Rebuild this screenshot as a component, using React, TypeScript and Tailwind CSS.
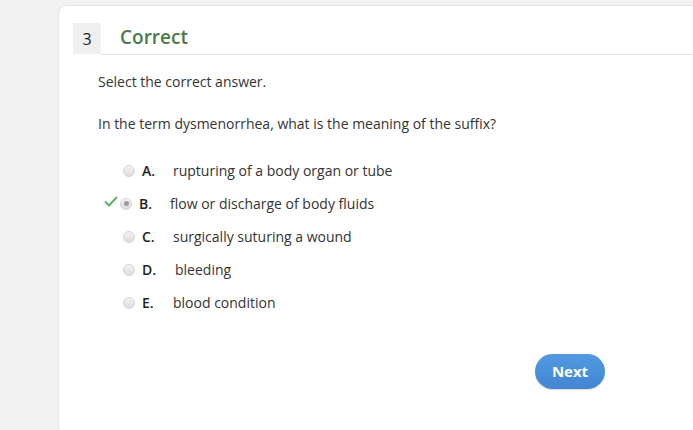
const OPTIONS = [
    { letter: "A.", text: "rupturing of a body organ or tube", selected: false },
    { letter: "B.", text: "flow or discharge of body fluids", selected: true },
    { letter: "C.", text: "surgically suturing a wound", selected: false },
    { letter: "D.", text: "bleeding", selected: false },
    { letter: "E.", text: "blood condition", selected: false },
];

function Radio({ checked }: { checked: boolean }) {
    return (
        <span className="flex h-[12px] w-[12px] items-center justify-center rounded-full border border-[#d4d4d4] bg-gradient-to-b from-[#f4f4f4] to-[#dcdcdc]">
            {checked ? <span className="h-[5px] w-[5px] rounded-full bg-[#9a9a9a]" /> : null}
        </span>
    );
}

export default function App() {
    return (
        <div
            className="h-[430px] w-[693px] overflow-hidden bg-[#f1f1f1] pl-[58px] pt-[5px] text-[#333]"
            style={{ fontFamily: '"Open Sans", sans-serif' }}
        >
            <div className="h-full rounded-tl-[8px] border-l border-t border-[#e6e6e6] bg-white pt-[17px]">
                <div className="flex items-stretch pl-[14px]">
                    <div className="flex h-[31px] w-[28px] items-center justify-center bg-[#efefef] text-[16px] text-[#222]">
                        3
                    </div>
                    <div className="flex flex-1 items-center border-b border-[#e3e3e3] pb-[2px] pl-[19px] text-[19px] font-semibold text-[#4c7a4c]">
                        Correct
                    </div>
                </div>

                <div className="pl-[39px] text-[14px]">
                    <p className="mt-[17px] leading-[20px]">Select the correct answer.</p>
                    <p className="mt-[22px] leading-[20px]">
                        In the term dysmenorrhea, what is the meaning of the suffix?
                    </p>

                    <div className="mt-[27px] flex flex-col gap-[13px]">
                        {OPTIONS.map((option) => (
                            <div
                                key={option.letter}
                                className={`flex h-[20px] items-center ${option.selected ? "pl-[6px]" : "pl-[25px]"}`}
                            >
                                {option.selected ? (
                                    <svg width="14" height="11" viewBox="0 0 14 11" className="mr-[2px] mt-[-4px]">
                                        <path d="M1 5.5 L5 9.5 L13 1" fill="none" stroke="#5cb85c" strokeWidth="2" />
                                    </svg>
                                ) : null}
                                <Radio checked={option.selected} />
                                <span className="ml-[7px] w-[31px] font-semibold text-[#222]">{option.letter}</span>
                                <span className={option.letter === "D." ? "ml-[2px]" : ""}>{option.text}</span>
                            </div>
                        ))}
                    </div>
                </div>

                <div className="mt-[41px] flex pl-[476px]">
                    <button className="h-[35px] w-[70px] rounded-full bg-gradient-to-b from-[#5199e0] to-[#4386d2] text-[15px] font-bold text-white shadow-[0_1px_1px_rgba(0,0,0,0.15)]">
                        Next
                    </button>
                </div>
            </div>
        </div>
    );
}
